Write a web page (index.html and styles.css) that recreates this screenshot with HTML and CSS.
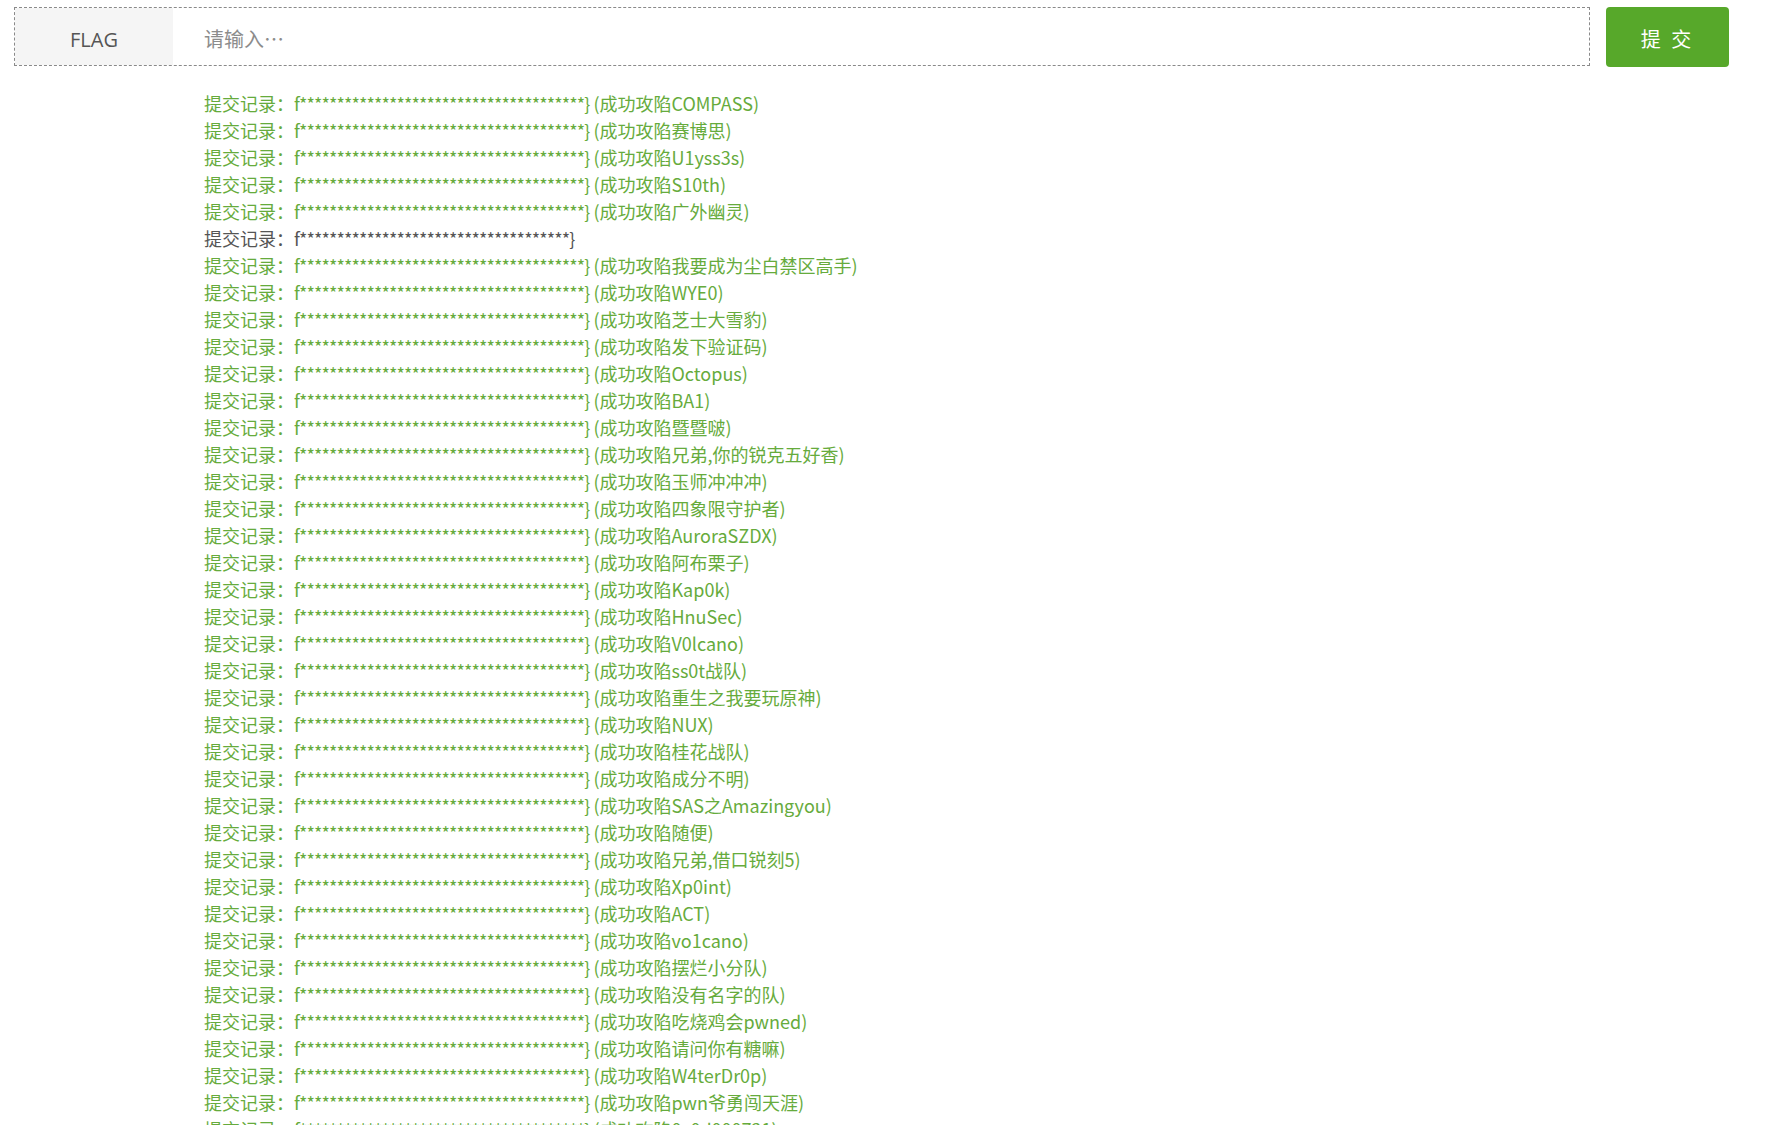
FILE: index.html
```html
<!DOCTYPE html>
<html lang="zh-CN">
<head>
<meta charset="utf-8">
<title>FLAG</title>
<link rel="stylesheet" href="styles.css">
</head>
<body>
<div class="page">
  <form class="flag-form">
    <div class="input-group">
      <span class="label">FLAG</span>
      <input class="flag-input" type="text" placeholder="请输入…">
    </div>
    <button class="submit" type="button">提 交</button>
  </form>
  <ul class="records">
    <li class="ok">提交记录：<span class="stars">f**************************************}</span> (成功攻陷COMPASS)</li>
    <li class="ok">提交记录：<span class="stars">f**************************************}</span> (成功攻陷赛博思)</li>
    <li class="ok">提交记录：<span class="stars">f**************************************}</span> (成功攻陷U1yss3s)</li>
    <li class="ok">提交记录：<span class="stars">f**************************************}</span> (成功攻陷S10th)</li>
    <li class="ok">提交记录：<span class="stars">f**************************************}</span> (成功攻陷广外幽灵)</li>
    <li class="fail">提交记录：<span class="stars">f************************************}</span></li>
    <li class="ok">提交记录：<span class="stars">f**************************************}</span> (成功攻陷我要成为尘白禁区高手)</li>
    <li class="ok">提交记录：<span class="stars">f**************************************}</span> (成功攻陷WYE0)</li>
    <li class="ok">提交记录：<span class="stars">f**************************************}</span> (成功攻陷芝士大雪豹)</li>
    <li class="ok">提交记录：<span class="stars">f**************************************}</span> (成功攻陷发下验证码)</li>
    <li class="ok">提交记录：<span class="stars">f**************************************}</span> (成功攻陷Octopus)</li>
    <li class="ok">提交记录：<span class="stars">f**************************************}</span> (成功攻陷BA1)</li>
    <li class="ok">提交记录：<span class="stars">f**************************************}</span> (成功攻陷暨暨啵)</li>
    <li class="ok">提交记录：<span class="stars">f**************************************}</span> (成功攻陷兄弟,你的锐克五好香)</li>
    <li class="ok">提交记录：<span class="stars">f**************************************}</span> (成功攻陷玉师冲冲冲)</li>
    <li class="ok">提交记录：<span class="stars">f**************************************}</span> (成功攻陷四象限守护者)</li>
    <li class="ok">提交记录：<span class="stars">f**************************************}</span> (成功攻陷AuroraSZDX)</li>
    <li class="ok">提交记录：<span class="stars">f**************************************}</span> (成功攻陷阿布栗子)</li>
    <li class="ok">提交记录：<span class="stars">f**************************************}</span> (成功攻陷Kap0k)</li>
    <li class="ok">提交记录：<span class="stars">f**************************************}</span> (成功攻陷HnuSec)</li>
    <li class="ok">提交记录：<span class="stars">f**************************************}</span> (成功攻陷V0lcano)</li>
    <li class="ok">提交记录：<span class="stars">f**************************************}</span> (成功攻陷ss0t战队)</li>
    <li class="ok">提交记录：<span class="stars">f**************************************}</span> (成功攻陷重生之我要玩原神)</li>
    <li class="ok">提交记录：<span class="stars">f**************************************}</span> (成功攻陷NUX)</li>
    <li class="ok">提交记录：<span class="stars">f**************************************}</span> (成功攻陷桂花战队)</li>
    <li class="ok">提交记录：<span class="stars">f**************************************}</span> (成功攻陷成分不明)</li>
    <li class="ok">提交记录：<span class="stars">f**************************************}</span> (成功攻陷SAS之Amazingyou)</li>
    <li class="ok">提交记录：<span class="stars">f**************************************}</span> (成功攻陷随便)</li>
    <li class="ok">提交记录：<span class="stars">f**************************************}</span> (成功攻陷兄弟,借口锐刻5)</li>
    <li class="ok">提交记录：<span class="stars">f**************************************}</span> (成功攻陷Xp0int)</li>
    <li class="ok">提交记录：<span class="stars">f**************************************}</span> (成功攻陷ACT)</li>
    <li class="ok">提交记录：<span class="stars">f**************************************}</span> (成功攻陷vo1cano)</li>
    <li class="ok">提交记录：<span class="stars">f**************************************}</span> (成功攻陷摆烂小分队)</li>
    <li class="ok">提交记录：<span class="stars">f**************************************}</span> (成功攻陷没有名字的队)</li>
    <li class="ok">提交记录：<span class="stars">f**************************************}</span> (成功攻陷吃烧鸡会pwned)</li>
    <li class="ok">提交记录：<span class="stars">f**************************************}</span> (成功攻陷请问你有糖嘛)</li>
    <li class="ok">提交记录：<span class="stars">f**************************************}</span> (成功攻陷W4terDr0p)</li>
    <li class="ok">提交记录：<span class="stars">f**************************************}</span> (成功攻陷pwn爷勇闯天涯)</li>
    <li class="ok">提交记录：<span class="stars">f**************************************}</span> (成功攻陷0x0d000721)</li>
  </ul>
</div>
</body>
</html>
```
FILE: styles.css
```css
html, body {
  margin: 0;
  padding: 0;
  background: #ffffff;
}
body {
  font-family: "Noto Sans CJK SC", "Noto Sans", sans-serif;
  overflow: hidden;
  height: 1125px;
}
.page {
  padding: 7px 0 0 14px;
}
.flag-form {
  display: flex;
  align-items: flex-start;
  gap: 16px;
  margin: 0;
}
.input-group {
  display: flex;
  width: 1576px;
  height: 59px;
  box-sizing: border-box;
  border: 1px dashed #8a8a8a;
}
.label {
  width: 158px;
  flex: none;
  box-sizing: border-box;
  padding-top: 5px;
  background: #f5f5f5;
  color: #555;
  font-family: "Open Sans", "Noto Sans CJK SC", sans-serif;
  font-size: 20px;
  display: flex;
  align-items: center;
  justify-content: center;
}
.flag-input {
  flex: 1;
  border: 0;
  outline: none;
  background: #fff;
  padding: 4px 0 0 31px;
  font-family: "Noto Sans CJK SC", sans-serif;
  font-size: 20px;
  color: #555;
}
.flag-input::placeholder {
  color: #8c8c8c;
}
.submit {
  width: 123px;
  height: 60px;
  border: 0;
  border-radius: 4px;
  background: #57a82a;
  color: #fff;
  font-family: "Noto Sans CJK SC", sans-serif;
  font-size: 20px;
  letter-spacing: 3px;
  padding: 3px 0 0 0;
  margin-top: 0;
}
.records {
  list-style: none;
  margin: 23px 0 0 190px;
  padding: 0;
  font-size: 18px;
  line-height: 27px;
}
.records li {
  white-space: nowrap;
}
.ok {
  color: #66ab3c;
}
.fail {
  color: #555;
}
.stars {
  letter-spacing: -0.9px;
}
```
